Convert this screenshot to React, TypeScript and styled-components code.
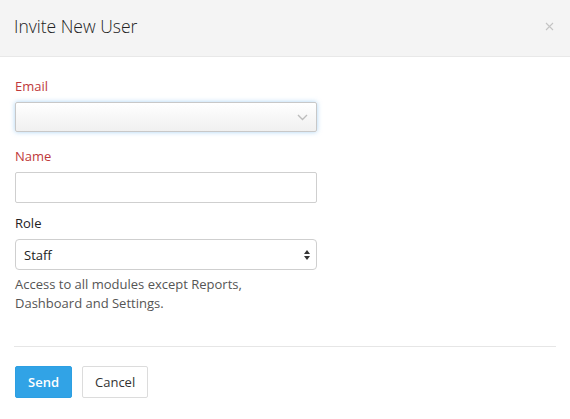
import React from "react";
import styled, { createGlobalStyle } from "styled-components";

const Global = createGlobalStyle`
  html, body { margin: 0; padding: 0; background: #fff; }
  body { font-family: "Open Sans", Lato, sans-serif; color: #333; }
  * { box-sizing: border-box; }
`;

const Modal = styled.div`
  width: 570px;
  height: 419px;
  background: #fff;
  display: flex;
  flex-direction: column;
`;

const Header = styled.div`
  height: 57px;
  background: #f4f4f4;
  border-bottom: 1px solid #e8e8e8;
  display: flex;
  align-items: center;
  justify-content: space-between;
  padding: 0 15px 4px 14px;
`;

const Title = styled.h1`
  margin: 0;
  font-size: 17.5px;
  font-weight: 300;
  color: #222;
`;

const Close = styled.button`
  border: 0;
  background: none;
  padding: 0;
  width: 12px;
  height: 12px;
  display: flex;
  align-items: center;
  justify-content: center;
  cursor: pointer;
`;

const Body = styled.div`
  padding: 20px 15px 0 15px;
  display: flex;
  flex-direction: column;
`;

const Label = styled.label<{ $required?: boolean }>`
  display: block;
  font-size: 13px;
  line-height: 18px;
  color: ${(p) => (p.$required ? "#c0393b" : "#222")};
  margin-bottom: 7px;
`;

const Field = styled.div<{ $gap: number }>`
  width: 302px;
  margin-bottom: ${(p) => p.$gap}px;
`;

const ComboBox = styled.div`
  position: relative;
  height: 30px;
  border: 1px solid #c8c8c8;
  border-radius: 2px;
  background: linear-gradient(#ffffff, #f0f0f0);
  box-shadow: 0 0 5px rgba(102, 175, 233, 0.55);
  display: flex;
  align-items: center;
  justify-content: flex-end;
  padding-right: 8px;
`;

const TextInput = styled.input`
  display: block;
  width: 100%;
  height: 31px;
  border: 1px solid #cfcfcf;
  border-radius: 2px;
  padding: 0 8px;
  font: inherit;
  font-size: 13px;
  outline: none;
`;

const SelectBox = styled.div`
  height: 31px;
  border: 1px solid #cfcfcf;
  border-radius: 4px;
  background: #fff;
  display: flex;
  align-items: center;
  justify-content: space-between;
  padding: 0 5px 0 8px;
  font-size: 13px;
  color: #222;
`;

const Help = styled.p`
  margin: 5px 0 0 0;
  font-size: 13px;
  line-height: 19px;
  color: #555;
`;

const Divider = styled.hr`
  margin: 33px 14px 0 14px;
  border: 0;
  border-top: 1px solid #e6e6e6;
`;

const Footer = styled.div`
  display: flex;
  gap: 10px;
  padding: 19px 15px 0 15px;
`;

const Button = styled.button<{ $primary?: boolean }>`
  height: 32px;
  padding: 0 ${(p) => (p.$primary ? 12 : 12)}px;
  border-radius: 2px;
  font-family: "Open Sans", sans-serif;
  font-size: 13px;
  font-weight: ${(p) => (p.$primary ? 600 : 400)};
  border: 1px solid ${(p) => (p.$primary ? "#2d9fe2" : "#dcdcdc")};
  background: ${(p) => (p.$primary ? "#31a3e6" : "#fff")};
  color: ${(p) => (p.$primary ? "#fff" : "#333")};
`;

export default function App() {
  return (
    <>
      <Global />
      <Modal>
        <Header>
          <Title>Invite New User</Title>
          <Close aria-label="Close">
            <svg width="9" height="9" viewBox="0 0 9 9">
              <path d="M1 1L8 8M8 1L1 8" stroke="#c4c4c4" strokeWidth="1.1" />
            </svg>
          </Close>
        </Header>
        <Body>
          <Field $gap={15}>
            <Label $required>Email</Label>
            <ComboBox>
              <svg width="11" height="7" viewBox="0 0 11 7">
                <path d="M1 1L5.5 5.5L10 1" stroke="#bdbdbd" strokeWidth="1.4" fill="none" />
              </svg>
            </ComboBox>
          </Field>
          <Field $gap={11}>
            <Label $required>Name</Label>
            <TextInput />
          </Field>
          <Field $gap={0}>
            <Label>Role</Label>
            <SelectBox>
              <span>Staff</span>
              <svg width="8" height="12" viewBox="0 0 8 12">
                <path d="M4 1L7 5H1Z" fill="#333" />
                <path d="M4 11L7 7H1Z" fill="#333" />
              </svg>
            </SelectBox>
          </Field>
          <Help>
            Access to all modules except Reports,
            <br />
            Dashboard and Settings.
          </Help>
        </Body>
        <Divider />
        <Footer>
          <Button $primary>Send</Button>
          <Button>Cancel</Button>
        </Footer>
      </Modal>
    </>
  );
}
